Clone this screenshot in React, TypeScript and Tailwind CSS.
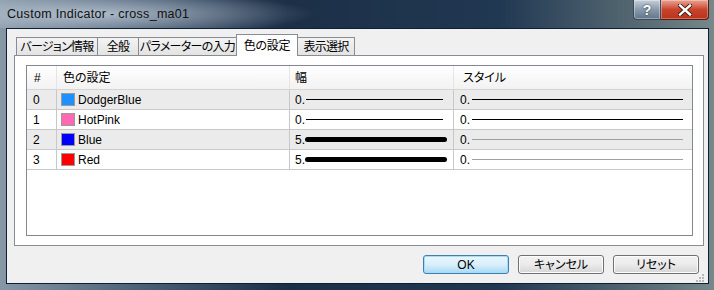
const rows = [
  { id: 0, name: "DodgerBlue", color: "bg-[#1e90ff]", thick: false, styleGray: false },
  { id: 1, name: "HotPink", color: "bg-[#ff69b4]", thick: false, styleGray: false },
  { id: 2, name: "Blue", color: "bg-[#0000ff]", thick: true, styleGray: true },
  { id: 3, name: "Red", color: "bg-[#ff0000]", thick: true, styleGray: true },
]

const tabs = [
  { label: "バージョン情報", w: "w-[82px]" },
  { label: "全般", w: "w-[42px]" },
  { label: "パラメーターの入力", w: "w-[99px]" },
  { label: "色の設定", w: "w-[62px]", active: true },
  { label: "表示選択", w: "w-[58px]" },
]

function TitleButtons() {
  return (
    <div className="mr-[5px] flex h-[20px]">
      <div className="flex w-[28px] items-center justify-center rounded-bl-[4px] border border-t-0 border-[#3b4a5a] bg-gradient-to-b from-[#c5d0da] via-[#8a9aab] to-[#61748a] shadow-[inset_0_0_0_1px_rgba(255,255,255,0.35)]">
        <span className="text-[14px] font-bold leading-none text-white [text-shadow:0_0_2px_#1d2a38]">?</span>
      </div>
      <div className="flex w-[48px] items-center justify-center rounded-br-[4px] border border-l-0 border-t-0 border-[#5a1a10] bg-gradient-to-b from-[#e8a393] via-[#c9432c] to-[#b8331b] shadow-[inset_0_0_0_1px_rgba(255,255,255,0.3)]">
        <svg width="14" height="12" viewBox="0 0 14 12">
          <path d="M2 1.5 L12 10.5 M12 1.5 L2 10.5" stroke="#3a1510" strokeWidth="4.2" strokeLinecap="square" />
          <path d="M2 1.5 L12 10.5 M12 1.5 L2 10.5" stroke="#ffffff" strokeWidth="2.4" strokeLinecap="square" />
        </svg>
      </div>
    </div>
  )
}

function Tabs() {
  return (
    <div className="flex h-[21px] items-end pl-[2px]">
      {tabs.map((tab) =>
        tab.active ? (
          <div
            key={tab.label}
            className={`${tab.w} relative z-10 -ml-px -mb-px flex h-[22px] items-center justify-center whitespace-nowrap border border-b-0 border-[#898c95] bg-white text-[12px] tracking-[-0.3px] text-black`}
          >
            {tab.label}
          </div>
        ) : (
          <div
            key={tab.label}
            className={`${tab.w} -ml-px flex h-[18px] items-center justify-center whitespace-nowrap border border-b-0 border-[#898c95] bg-gradient-to-b from-[#f3f3f3] to-[#e3e3e3] text-[12px] tracking-[-0.7px] text-black first:ml-0`}
          >
            {tab.label}
          </div>
        ),
      )}
    </div>
  )
}

function ColorTable() {
  return (
    <div className="h-[171px] w-[667px] border border-[#828790] bg-white">
      <div className="flex h-[24px] border-b border-[#d5d5d5] bg-gradient-to-b from-white to-[#f2f2f2] text-[12px]">
        <div className="flex w-[30px] items-center border-r border-[#e5e5e5] pl-[7px]">#</div>
        <div className="flex w-[233px] items-center border-r border-[#e5e5e5] pl-[6px]">色の設定</div>
        <div className="flex w-[164px] items-center border-r border-[#e5e5e5] pl-[5px]">幅</div>
        <div className="flex w-[237px] items-center pl-[9px]">スタイル</div>
      </div>
      {rows.map((row) => (
        <div
          key={row.id}
          className={`flex h-[20px] border-b border-[#c8c8c8] text-[12px] ${row.id % 2 === 0 ? "bg-[#ebebeb]" : "bg-white"}`}
        >
          <div className="flex w-[30px] items-center border-r border-[#c8c8c8] pl-[6px]">{row.id}</div>
          <div className="flex w-[233px] items-center gap-[3px] border-r border-[#c8c8c8] pl-[4px]">
            <span className={`h-[13px] w-[14px] border border-[#9a9a9a] ${row.color}`} />
            <span>{row.name}</span>
          </div>
          <div className="flex w-[164px] items-center border-r border-[#c8c8c8] pl-[5px]">
            <span className="w-[9px]">{row.thick ? "5." : "0."}</span>
            {row.thick ? (
              <span className="ml-px h-[5px] w-[142px] rounded-full bg-black" />
            ) : (
              <span className="ml-[2px] h-px w-[137px] bg-black" />
            )}
          </div>
          <div className="flex w-[237px] items-center pl-[6px]">
            <span className="w-[12px]">0.</span>
            <span className={`h-px w-[211px] ${row.styleGray ? "bg-[#a0a0a0]" : "bg-black"}`} />
          </div>
        </div>
      ))}
    </div>
  )
}

function DialogButton({ label, primary }: { label: string; primary?: boolean }) {
  return (
    <button
      type="button"
      className={
        primary
          ? "h-[19px] w-[86px] rounded-[3px] border border-[#3c7fb1] bg-gradient-to-b from-[#eaf6fd] via-[#d9f0fc] to-[#a7d9f5] text-[12px] text-black shadow-[inset_0_0_0_1px_#a9dcf6]"
          : "h-[19px] w-[86px] rounded-[3px] border border-[#707070] bg-gradient-to-b from-[#f2f2f2] via-[#ebebeb] to-[#d5d5d5] text-[12px] text-black shadow-[inset_0_0_0_1px_#fcfcfc]"
      }
    >
      {label}
    </button>
  )
}

export default function App() {
  return (
    <div className="h-[290px] w-[714px] overflow-hidden bg-[linear-gradient(90deg,#8797a6_0%,#50647a_18%,#1c2f47_40%,#213852_70%,#5d7077_92%,#76888a_100%)] font-['Liberation_Sans','Noto_Sans_CJK_JP',sans-serif] [font-feature-settings:'palt']">
      <div className="flex h-[28px] items-start justify-between bg-[radial-gradient(ellipse_220px_22px_at_95px_14px,rgba(200,212,224,0.75),rgba(200,212,224,0))]">
        <div className="pl-[7px] pt-[6px] text-[12.5px] leading-[16px] tracking-[0.3px] text-[#101010]">
          Custom Indicator - cross_ma01
        </div>
        <TitleButtons />
      </div>
      <div className="ml-[6px] h-[256px] w-[703px] border border-[#0f1f33] bg-[#f0f0f0] text-black">
        <div className="flex h-full flex-col pl-[7px] pr-[4px] pt-[5px]">
          <Tabs />
          <div className="h-[192px] w-[690px] border border-[#898c95] bg-white pl-[11px] pt-[9px]">
            <ColorTable />
          </div>
          <div className="mt-[9px] flex justify-end gap-[9px] pr-[5px]">
            <DialogButton label="OK" primary />
            <DialogButton label="キャンセル" />
            <DialogButton label="リセット" />
          </div>
          <div className="flex flex-1 items-end justify-end pb-[1px]">
            <svg width="8" height="8" viewBox="0 0 8 8">
              <rect x="6" y="0" width="2" height="2" fill="#b8b8b8" />
              <rect x="3" y="3" width="2" height="2" fill="#b8b8b8" />
              <rect x="6" y="3" width="2" height="2" fill="#b8b8b8" />
              <rect x="0" y="6" width="2" height="2" fill="#b8b8b8" />
              <rect x="3" y="6" width="2" height="2" fill="#b8b8b8" />
              <rect x="6" y="6" width="2" height="2" fill="#b8b8b8" />
            </svg>
          </div>
        </div>
      </div>
    </div>
  )
}
